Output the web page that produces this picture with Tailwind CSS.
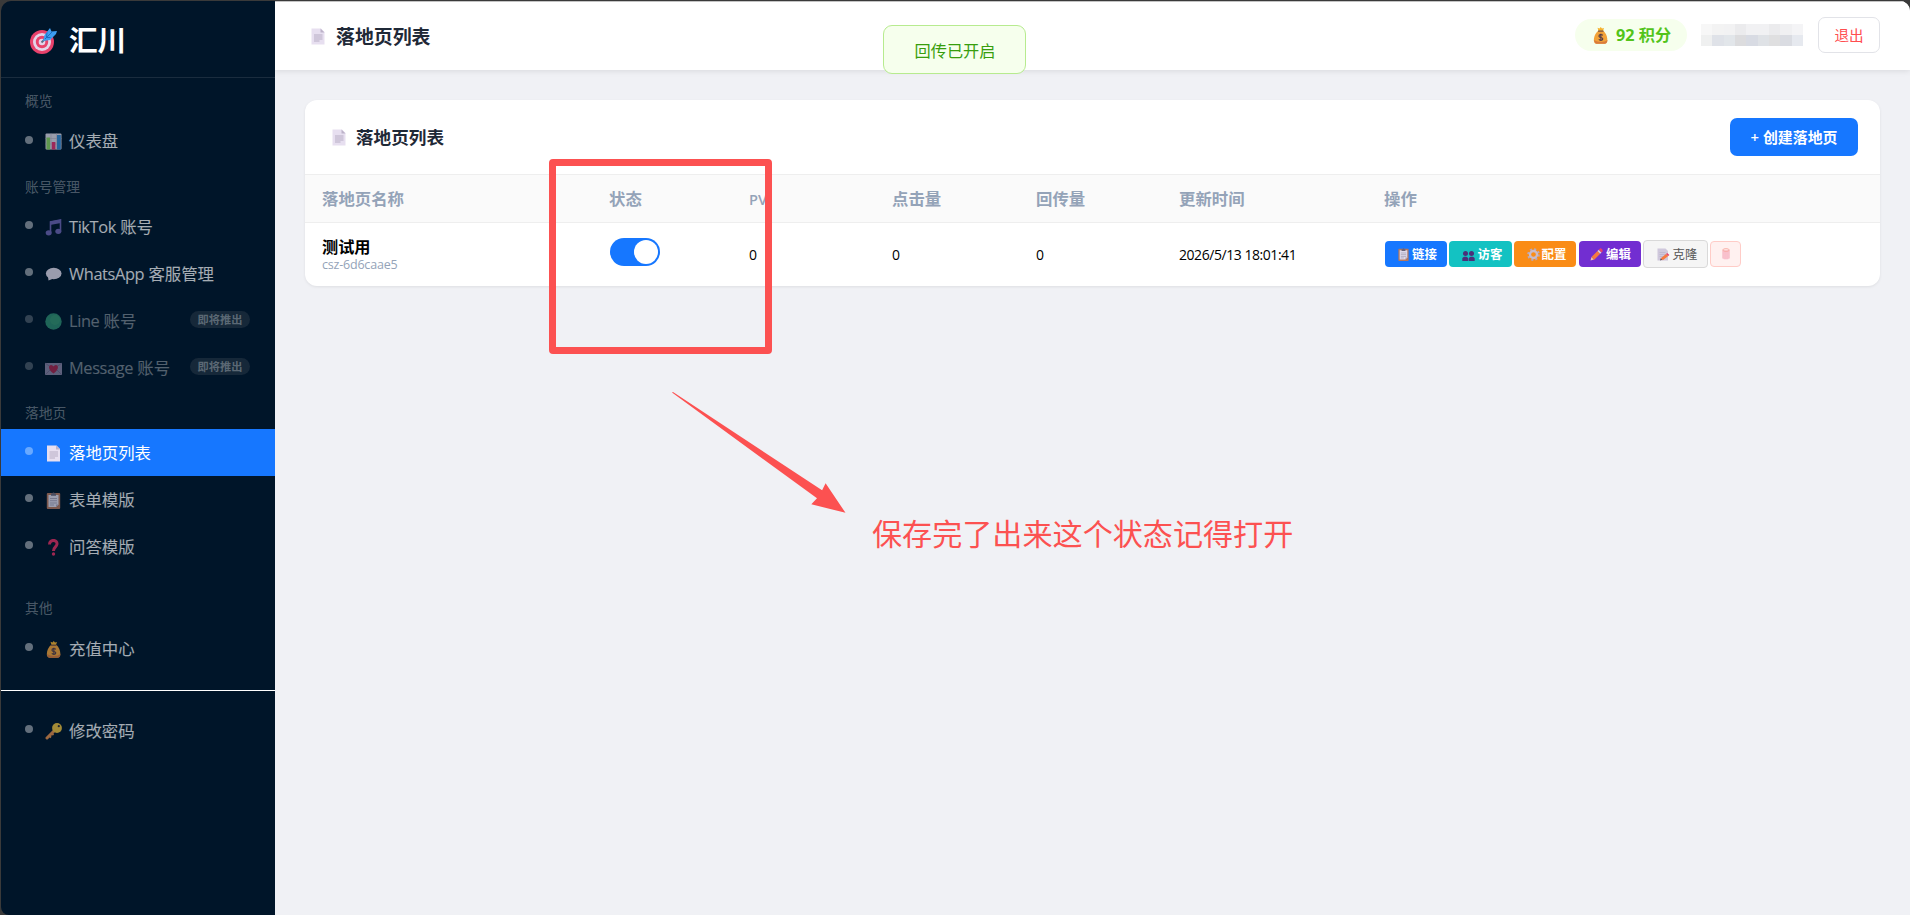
<!DOCTYPE html>
<html lang="zh-CN">
<head>
    <meta charset="UTF-8">
    <meta name="viewport" content="width=device-width, initial-scale=1.0">
    <title>落地页列表</title>
    <script src="https://cdn.jsdelivr.net/npm/@tailwindcss/browser@4"></script>
</head>
<body class="bg-[#3a3a3a] h-screen overflow-hidden font-['Open_Sans','Noto_Sans_CJK_SC',sans-serif]">
    <!-- Icons -->
    <svg class="hidden">
        <symbol id="i-target" viewBox="0 0 27 27">
            <circle cx="12" cy="15" r="12" fill="#e8416b"/>
            <circle cx="12" cy="15" r="9" fill="#e4d3e8"/>
            <circle cx="12" cy="15" r="6.2" fill="#e8416b"/>
            <circle cx="12" cy="15" r="3.3" fill="#e4d3e8"/>
            <path d="M11.5 15.5L19 8" stroke="#5c6b86" stroke-width="1.8"/>
            <path d="M13 14l1.500-6L20 1l1.500 3.500L27 4l-1 3-6 6z" fill="#3c9df0"/>
            <path d="M15 12l7-7M17 5.500l-.5 5M20.500 10.500h-4" stroke="#1b6fc4" stroke-width="1"/>
        </symbol>
        <symbol id="i-chart" viewBox="0 0 17 17">
            <rect x=".5" y=".5" width="16" height="16" rx="1" fill="#d9d5e2"/>
            <path d="M.5 5.5h16M.5 11h16M6 .5v16M11.5 .5v16" stroke="#b3aec2" stroke-width=".6"/>
            <rect x="1.5" y="4.5" width="3.6" height="12" fill="#86cf5f"/>
            <rect x="6.8" y="9" width="3.6" height="7.5" fill="#e0306e"/>
            <rect x="12" y="2" width="3.8" height="14.500" fill="#3487cf"/>
        </symbol>
        <symbol id="i-music" viewBox="0 0 17 17">
            <path d="M5.500 13.500V3l10-2v11.500" fill="none" stroke="#6b62b0" stroke-width="1.600"/>
            <path d="M5 2.500L16 .5v3.500L5 6z" fill="#6b62b0"/>
            <ellipse cx="3.700" cy="13.800" rx="3" ry="2.600" fill="#6b62b0"/>
            <ellipse cx="13.300" cy="12.300" rx="3" ry="2.600" fill="#6b62b0"/>
        </symbol>
        <symbol id="i-chat" viewBox="0 0 17 17">
            <ellipse cx="8.700" cy="7.500" rx="7.800" ry="5.800" fill="#dcd6e6"/>
            <path d="M3 10.500l.5 4 5-2z" fill="#dcd6e6"/>
        </symbol>
        <symbol id="i-green" viewBox="0 0 17 17">
            <circle cx="8.500" cy="8.500" r="8.200" fill="#349a78"/>
            <circle cx="10" cy="7" r="5" fill="#3da579"/>
        </symbol>
        <symbol id="i-letter" viewBox="0 0 17 17">
            <rect y="3" width="17" height="12" fill="#b9aacd"/>
            <path d="M0 3l8.500 6L17 3M0 15l6-6M17 15l-6-6" fill="none" stroke="#8f80ab" stroke-width=".7"/>
            <path d="M8.500 13.500C2.500 9.500 3.500 5 6 5c1.500 0 2.500 1.500 2.500 1.500S9.500 5 11 5c2.500 0 3.500 4.500-2.500 8.500z" fill="#e02a58"/>
        </symbol>
        <symbol id="i-page" viewBox="0 0 14 17">
            <path d="M.5.5h9.500l3.500 3.500v12.500H.5z" fill="#e7dff0"/>
            <path d="M9.500.5v4h4z" fill="#bdb3c9"/>
            <path d="M3 7h8.500M3 9h8.500M3 11h8.500M3 13h5.500" stroke="#b7adc4" stroke-width="1"/>
        </symbol>
        <symbol id="i-clip" viewBox="0 0 14 17">
            <rect x=".3" y="1" width="13.400" height="16" rx="1" fill="#b3775f"/>
            <path d="M2 3h10v9.500L9.500 15H2z" fill="#ddd9ea"/>
            <path d="M9.500 15v-2.500H12z" fill="#a9a3ba"/>
            <path d="M4.500 3.800V1.500h1.300C6 0 8 0 8.200 1.500h1.300v2.300z" fill="#686478"/>
            <path d="M3.500 6.500h7M3.500 8.700h7M3.500 11h7M3.500 13h4" stroke="#9a95ad" stroke-width=".8"/>
        </symbol>
        <symbol id="i-question" viewBox="0 0 17 17">
            <path d="M4.500 5.500C4.500 0 12.500.2 12 5.200 11.700 8 8.500 8 8.500 12" fill="none" stroke="#e02f63" stroke-width="3"/>
            <circle cx="8.500" cy="15" r="1.700" fill="#e02f63"/>
        </symbol>
        <symbol id="i-money" viewBox="0 0 17 17">
            <path d="M5.500.8l2 .7L8.700 0l1.300 1.500 2-.5L11 4H6.500z" fill="#f5b22e"/>
            <path d="M6 4h5.500c4 3 5.500 12.500 1.500 12.700H4.200C0 16.500 1.800 7 6 4z" fill="#f2a239"/>
            <path d="M2 13c.5 3 1.500 3.700 2.500 3.700h8c2 0 2.700-1.200 3-3.700-3 2.500-10 2.500-13.500 0z" fill="#d97b3d"/>
            <path d="M6 4.200h5.500" stroke="#7e5340" stroke-width="1.300"/>
            <path d="M10.800 8.300C9.500 7 6.700 7.500 7 9.300c.3 1.600 3.700.8 3.800 2.500.1 1.800-2.800 2-4 .6M8.900 6.700v7.300" fill="none" stroke="#513a48" stroke-width="1.100"/>
        </symbol>
        <symbol id="i-key" viewBox="0 0 17 17">
            <path d="M9.500 7.500L2 15" stroke="#df8c4b" stroke-width="3" stroke-linecap="round"/>
            <path d="M4 12.500l2 2M6.500 10l2 2" stroke="#df8c4b" stroke-width="1.800"/>
            <circle cx="12" cy="5" r="4.900" fill="#e8bd3d"/>
            <circle cx="13.800" cy="3.200" r="1.100" fill="#2a2a34"/>
        </symbol>
        <symbol id="i-users" viewBox="0 0 13 13">
            <circle cx="3.500" cy="4.500" r="2.500" fill="#4b2f7a"/>
            <circle cx="9.500" cy="4.500" r="2.500" fill="#4b2f7a"/>
            <path d="M.3 12V9.500C.5 7 6 7 6.200 9.500V12zM6.800 12V9.500C7 7 12.500 7 12.700 9.500V12z" fill="#4b2f7a"/>
        </symbol>
        <symbol id="i-gear" viewBox="0 0 13 13">
            <circle cx="6.500" cy="6.500" r="5.300" fill="none" stroke="#b9a9bd" stroke-width="2" stroke-dasharray="2.080"/>
            <circle cx="6.500" cy="6.500" r="3.500" fill="none" stroke="#c9bccb" stroke-width="2.300"/>
        </symbol>
        <symbol id="i-pencil" viewBox="0 0 13 13">
            <path d="M.5 12.500l1-3.500 2.500 2.500z" fill="#e9c9a8"/>
            <path d="M1.500 9l6-6 2.700 2.700-6 6z" fill="#f5793f"/>
            <path d="M7.500 3l1.300-1.300 2.700 2.700-1.300 1.300z" fill="#d8d3df"/>
            <path d="M8.800 1.700L10 .5c1-.8 3.200 1.500 2.500 2.700l-1 1.200z" fill="#e8416b"/>
        </symbol>
        <symbol id="i-memo" viewBox="0 0 13 13">
            <path d="M.5.5h8l2.500 2.500v9.500H.5z" fill="#cfc8dc"/>
            <path d="M2.500 4.500h6M2.500 6.500h6M2.500 8.500h4" stroke="#b9b1c8" stroke-width=".7"/>
            <path d="M3 12.500l.8-2.300 1.600 1.600z" fill="#5a4a55"/>
            <path d="M3.800 10.200l5.200-4.200 2.200 2-5.400 4.200z" fill="#f5793f"/>
            <path d="M9 6l1.200-1 2.200 2-1.200 1z" fill="#e8416b"/>
        </symbol>
        <symbol id="i-trash" viewBox="0 0 10 12">
            <path d="M1.700 2h6.600v8c0 2-6.600 2-6.600 0z" fill="#fbd3dc"/>
            <path d="M2 2.500v8M4 3v8M6 3v8M8 2.500v8" stroke="#f5a9b8" stroke-width=".9"/>
            <ellipse cx="5" cy="2" rx="3.300" ry="1.300" fill="none" stroke="#f7a59c" stroke-width=".9"/>
        </symbol>
    </svg>

    <div class="flex h-full pt-px pl-px">
        <!-- Sidebar -->
        <aside class="w-[274px] shrink-0 bg-[#001529] rounded-tl-[10px] rounded-bl-[8px] text-[16.400px] text-white/65 overflow-hidden">
            <div class="h-[77px] flex items-center gap-3 pl-[29px] border-b border-[#1a2c3e]">
                <svg class="size-[27px] mt-0.5"><use href="#i-target"/></svg>
                <span class="text-[28.600px] leading-8 font-bold text-white mt-0.5">汇川</span>
            </div>

            <div class="h-[39px] flex items-end pl-6 pb-2 text-[13.750px] leading-4 text-white/30">概览</div>
            <a class="h-[47px] flex items-center pl-6 pt-0.5">
                <i class="size-2 rounded-full bg-current/60 mr-3 -mt-1"></i>
                <svg class="size-[17px] mr-[7px] opacity-70"><use href="#i-chart"/></svg>仪表盘
            </a>

            <div class="h-[39px] flex items-end pl-6 pb-2 text-[13.750px] leading-4 text-white/30">账号管理</div>
            <a class="h-[47px] flex items-center pl-6 pt-0.5">
                <i class="size-2 rounded-full bg-current/60 mr-3 -mt-[5px]"></i>
                <svg class="size-[17px] mr-[7px] opacity-70"><use href="#i-music"/></svg><span class="tracking-[-0.4px]">TikTok</span>&nbsp;账号
            </a>
            <a class="h-[47px] flex items-center pl-6 pt-0.5">
                <i class="size-2 rounded-full bg-current/60 mr-3 -mt-[5px]"></i>
                <svg class="size-[17px] mr-[7px] opacity-70"><use href="#i-chat"/></svg><span class="tracking-[-0.4px]">WhatsApp</span>&nbsp;客服管理
            </a>
            <a class="h-[47px] flex items-center pl-6 pr-[25px] pt-0.5">
                <i class="size-2 rounded-full bg-current/60 mr-3 -mt-[5px] opacity-50"></i>
                <svg class="size-[17px] mr-[7px] opacity-60"><use href="#i-green"/></svg><span class="opacity-50"><span class="tracking-[-0.4px]">Line</span> 账号</span>
                <span class="ml-auto w-[60px] h-[17px] -mt-[5px] rounded-full bg-[#162839] text-[11.200px] leading-[17px] text-center font-bold text-[#5b6874]">即将推出</span>
            </a>
            <a class="h-[47px] flex items-center pl-6 pr-[25px] pt-0.5">
                <i class="size-2 rounded-full bg-current/60 mr-3 -mt-[5px] opacity-50"></i>
                <svg class="size-[17px] mr-[7px] opacity-50"><use href="#i-letter"/></svg><span class="opacity-50"><span class="tracking-[-0.4px]">Message</span> 账号</span>
                <span class="ml-auto w-[60px] h-[17px] -mt-[5px] rounded-full bg-[#162839] text-[11.200px] leading-[17px] text-center font-bold text-[#5b6874]">即将推出</span>
            </a>

            <div class="h-[38px] flex items-end pl-6 pb-2 text-[13.750px] leading-4 text-white/30">落地页</div>
            <a class="h-[47px] flex items-center pl-6 pt-0.5 bg-[#1677ff] text-white">
                <i class="size-2 rounded-full bg-[#69a9ff] mr-3 -mt-[5px]"></i>
                <svg class="size-[17px] mr-[7px]"><use href="#i-page"/></svg>落地页列表
            </a>
            <a class="h-[47px] flex items-center pl-6 pt-0.5">
                <i class="size-2 rounded-full bg-current/60 mr-3 -mt-[5px]"></i>
                <svg class="size-[17px] mr-[7px] opacity-70"><use href="#i-clip"/></svg>表单模版
            </a>
            <a class="h-[47px] flex items-center pl-6 pt-0.5">
                <i class="size-2 rounded-full bg-current/60 mr-3 -mt-[5px]"></i>
                <svg class="size-[17px] mr-[7px] opacity-70"><use href="#i-question"/></svg>问答模版
            </a>

            <div class="h-[55px] flex items-end pl-6 pb-[9px] text-[13.750px] leading-4 text-white/30">其他</div>
            <a class="h-[47px] flex items-center pl-6 pt-px">
                <i class="size-2 rounded-full bg-current/60 mr-3 -mt-[5px]"></i>
                <svg class="size-[17px] mr-[7px] opacity-70"><use href="#i-money"/></svg>充值中心
            </a>
            <div class="mt-[18px] mb-4 h-px bg-white"></div>
            <a class="h-[47px] flex items-center pl-6 pt-0.5">
                <i class="size-2 rounded-full bg-current/60 mr-3 -mt-[5px]"></i>
                <svg class="size-[17px] mr-[7px] opacity-70"><use href="#i-key"/></svg>修改密码
            </a>
        </aside>

        <!-- Main -->
        <main class="grow bg-[#f0f1f5] rounded-tr-[10px] overflow-hidden">
            <header class="h-[69px] flex items-center bg-white border-t border-[#c4c4c4] pl-9 pr-[30px] shadow-[0_1px_6px_rgba(0,0,0,0.1)]">
                <svg class="w-[14px] h-[19px] mr-[11px]"><use href="#i-page"/></svg>
                <h1 class="text-[18.900px] leading-6 font-bold text-[#1f2937] mt-0.5">落地页列表</h1>
                <div class="ml-auto -mt-0.5 flex items-center">
                    <div class="w-28 h-8 rounded-full bg-[#f6ffed] flex items-center pl-[17px] pt-px gap-[7px] text-[16.200px] font-bold text-[#52c41a]">
                        <svg class="size-[17px]"><use href="#i-money"/></svg>92 积分
                    </div>
                    <!-- Masked account name -->
                    <div class="ml-[14px] w-[102px] h-[22px] grid grid-cols-9 grid-rows-2">
                        <i class="bg-[#f7f7f7]"></i><i class="bg-[#f3f3f3]"></i><i class="bg-[#f2f2f3]"></i><i class="bg-[#ebebed]"></i><i class="bg-[#f1f1f3]"></i><i class="bg-[#f1f1f3]"></i><i class="bg-[#ebebed]"></i><i class="bg-[#f0f0f2]"></i><i class="bg-[#f4f4f6]"></i>
                        <i class="bg-[#eff0f0]"></i><i class="bg-[#dfe2e8]"></i><i class="bg-[#e2e6ea]"></i><i class="bg-[#dcdcde]"></i><i class="bg-[#d8dbe3]"></i><i class="bg-[#dfe2e6]"></i><i class="bg-[#dfdfe0]"></i><i class="bg-[#dadce2]"></i><i class="bg-[#e6e9ef]"></i>
                    </div>
                    <button class="ml-[15px] w-[62px] h-9 pt-0.5 rounded-[7px] border border-[#e2e3e8] text-[14.600px] text-[#ff4d4f]">退出</button>
                </div>
            </header>

            <section class="mx-[30px] mt-[30px] h-[186px] bg-white rounded-xl shadow-[0_1px_3px_rgba(0,0,0,0.08)] overflow-hidden">
                <div class="h-[74px] flex items-center pl-[27px] pr-[22px]">
                    <svg class="w-[14px] h-[17px] mr-[10px]"><use href="#i-page"/></svg>
                    <h2 class="text-[17.600px] leading-6 font-bold text-[#1f2937]">落地页列表</h2>
                    <button class="ml-auto w-32 h-[38px] rounded-[7px] bg-[#1677ff] text-white text-[14.900px] font-semibold">+ 创建落地页</button>
                </div>
                <div class="h-[49px] grid grid-cols-[287px_140px_143px_144px_143px_205px_1fr] items-center pl-[17px] pt-0.5 bg-[#fafafa] border-y border-[#eeeeee] text-[16.400px] font-semibold text-[#94a3b8]">
                    <span>落地页名称</span>
                    <span>状态</span>
                    <span class="text-[14.500px]">PV</span>
                    <span>点击量</span>
                    <span>回传量</span>
                    <span>更新时间</span>
                    <span>操作</span>
                </div>
                <div class="h-[63px] grid grid-cols-[287px_140px_143px_144px_143px_205px_1fr] items-center pl-[17px] text-sm text-black">
                    <div class="pt-px">
                        <div class="text-[16.200px] leading-5 font-bold">测试用</div>
                        <div class="text-[12.500px] leading-4 tracking-[-0.200px] text-[#94a3b8]">csz-6d6caae5</div>
                    </div>
                    <div class="ml-px -mt-[5px] w-[50px] h-7 rounded-full bg-[#1677ff] flex justify-end items-center pr-0.5">
                        <span class="size-6 rounded-full bg-white"></span>
                    </div>
                    <span class="pt-px">0</span>
                    <span class="pt-px">0</span>
                    <span class="pt-px">0</span>
                    <span class="pt-px tracking-[-0.450px]">2026/5/13 18:01:41</span>
                    <div class="flex items-center gap-0.5 text-[12.400px] font-bold text-white -mt-0.5">
                        <button class="w-[62px] h-[26px] ml-px pl-[3px] pt-0.5 rounded-[4px] bg-[#1677ff] flex items-center justify-center gap-[3px]"><svg class="w-[11px] h-[13px]"><use href="#i-clip"/></svg>链接</button>
                        <button class="w-[63px] h-[26px] pl-[3px] pt-0.5 rounded-[4px] bg-[#13c2c2] flex items-center justify-center gap-[3px]"><svg class="size-[13px] mt-0.5"><use href="#i-users"/></svg>访客</button>
                        <button class="w-[62px] h-[26px] pl-[3px] pt-0.5 rounded-[4px] bg-[#fa8c16] flex items-center justify-center gap-[2px]"><svg class="size-[13px]"><use href="#i-gear"/></svg>配置</button>
                        <button class="w-[62px] h-[26px] ml-px pl-px pt-0.5 rounded-[4px] bg-[#722ed1] flex items-center justify-center gap-[3px]"><svg class="size-[13px]"><use href="#i-pencil"/></svg>编辑</button>
                        <button class="w-[65px] h-7 pl-[3px] pt-0.5 rounded-[4px] bg-[#f5f5f5] border border-[#d9d9d9] text-[#555555] font-normal flex items-center justify-center gap-[3px]"><svg class="size-[13px]"><use href="#i-memo"/></svg>克隆</button>
                        <button class="w-[31px] h-[26px] rounded-[4px] bg-[#fff1f0] border border-[#ffccc7] flex items-center justify-center"><svg class="w-[10px] h-[12px]"><use href="#i-trash"/></svg></button>
                    </div>
                </div>
            </section>
        </main>
    </div>

    <!-- Toast -->
    <div class="absolute left-[883px] top-[25px] w-[143px] h-[49px] rounded-[9px] border border-[#b7eb8f] bg-[#f6ffed] flex items-center justify-center pt-[3px] pl-px text-[16.200px] text-[#389e0d]">回传已开启</div>

    <!-- Annotations -->
    <div class="absolute left-[549px] top-[159px] w-[223px] h-[195px] rounded-[4px] border-[7px] border-[#fc5151]"></div>
    <svg class="absolute left-[665px] top-[385px] w-[190px] h-[135px]" viewBox="665 385 190 135">
        <path d="M672 392.500L673 392L822.100 490.300L825.600 483.300L845.500 512.800L811.300 504.300L817 498.300Z" fill="#fc5151"/>
    </svg>
    <div class="absolute left-[872px] top-[512px] text-[30.100px] leading-[44px] whitespace-nowrap text-[#fc5151]">保存完了出来这个状态记得打开</div>
</body>
</html>
